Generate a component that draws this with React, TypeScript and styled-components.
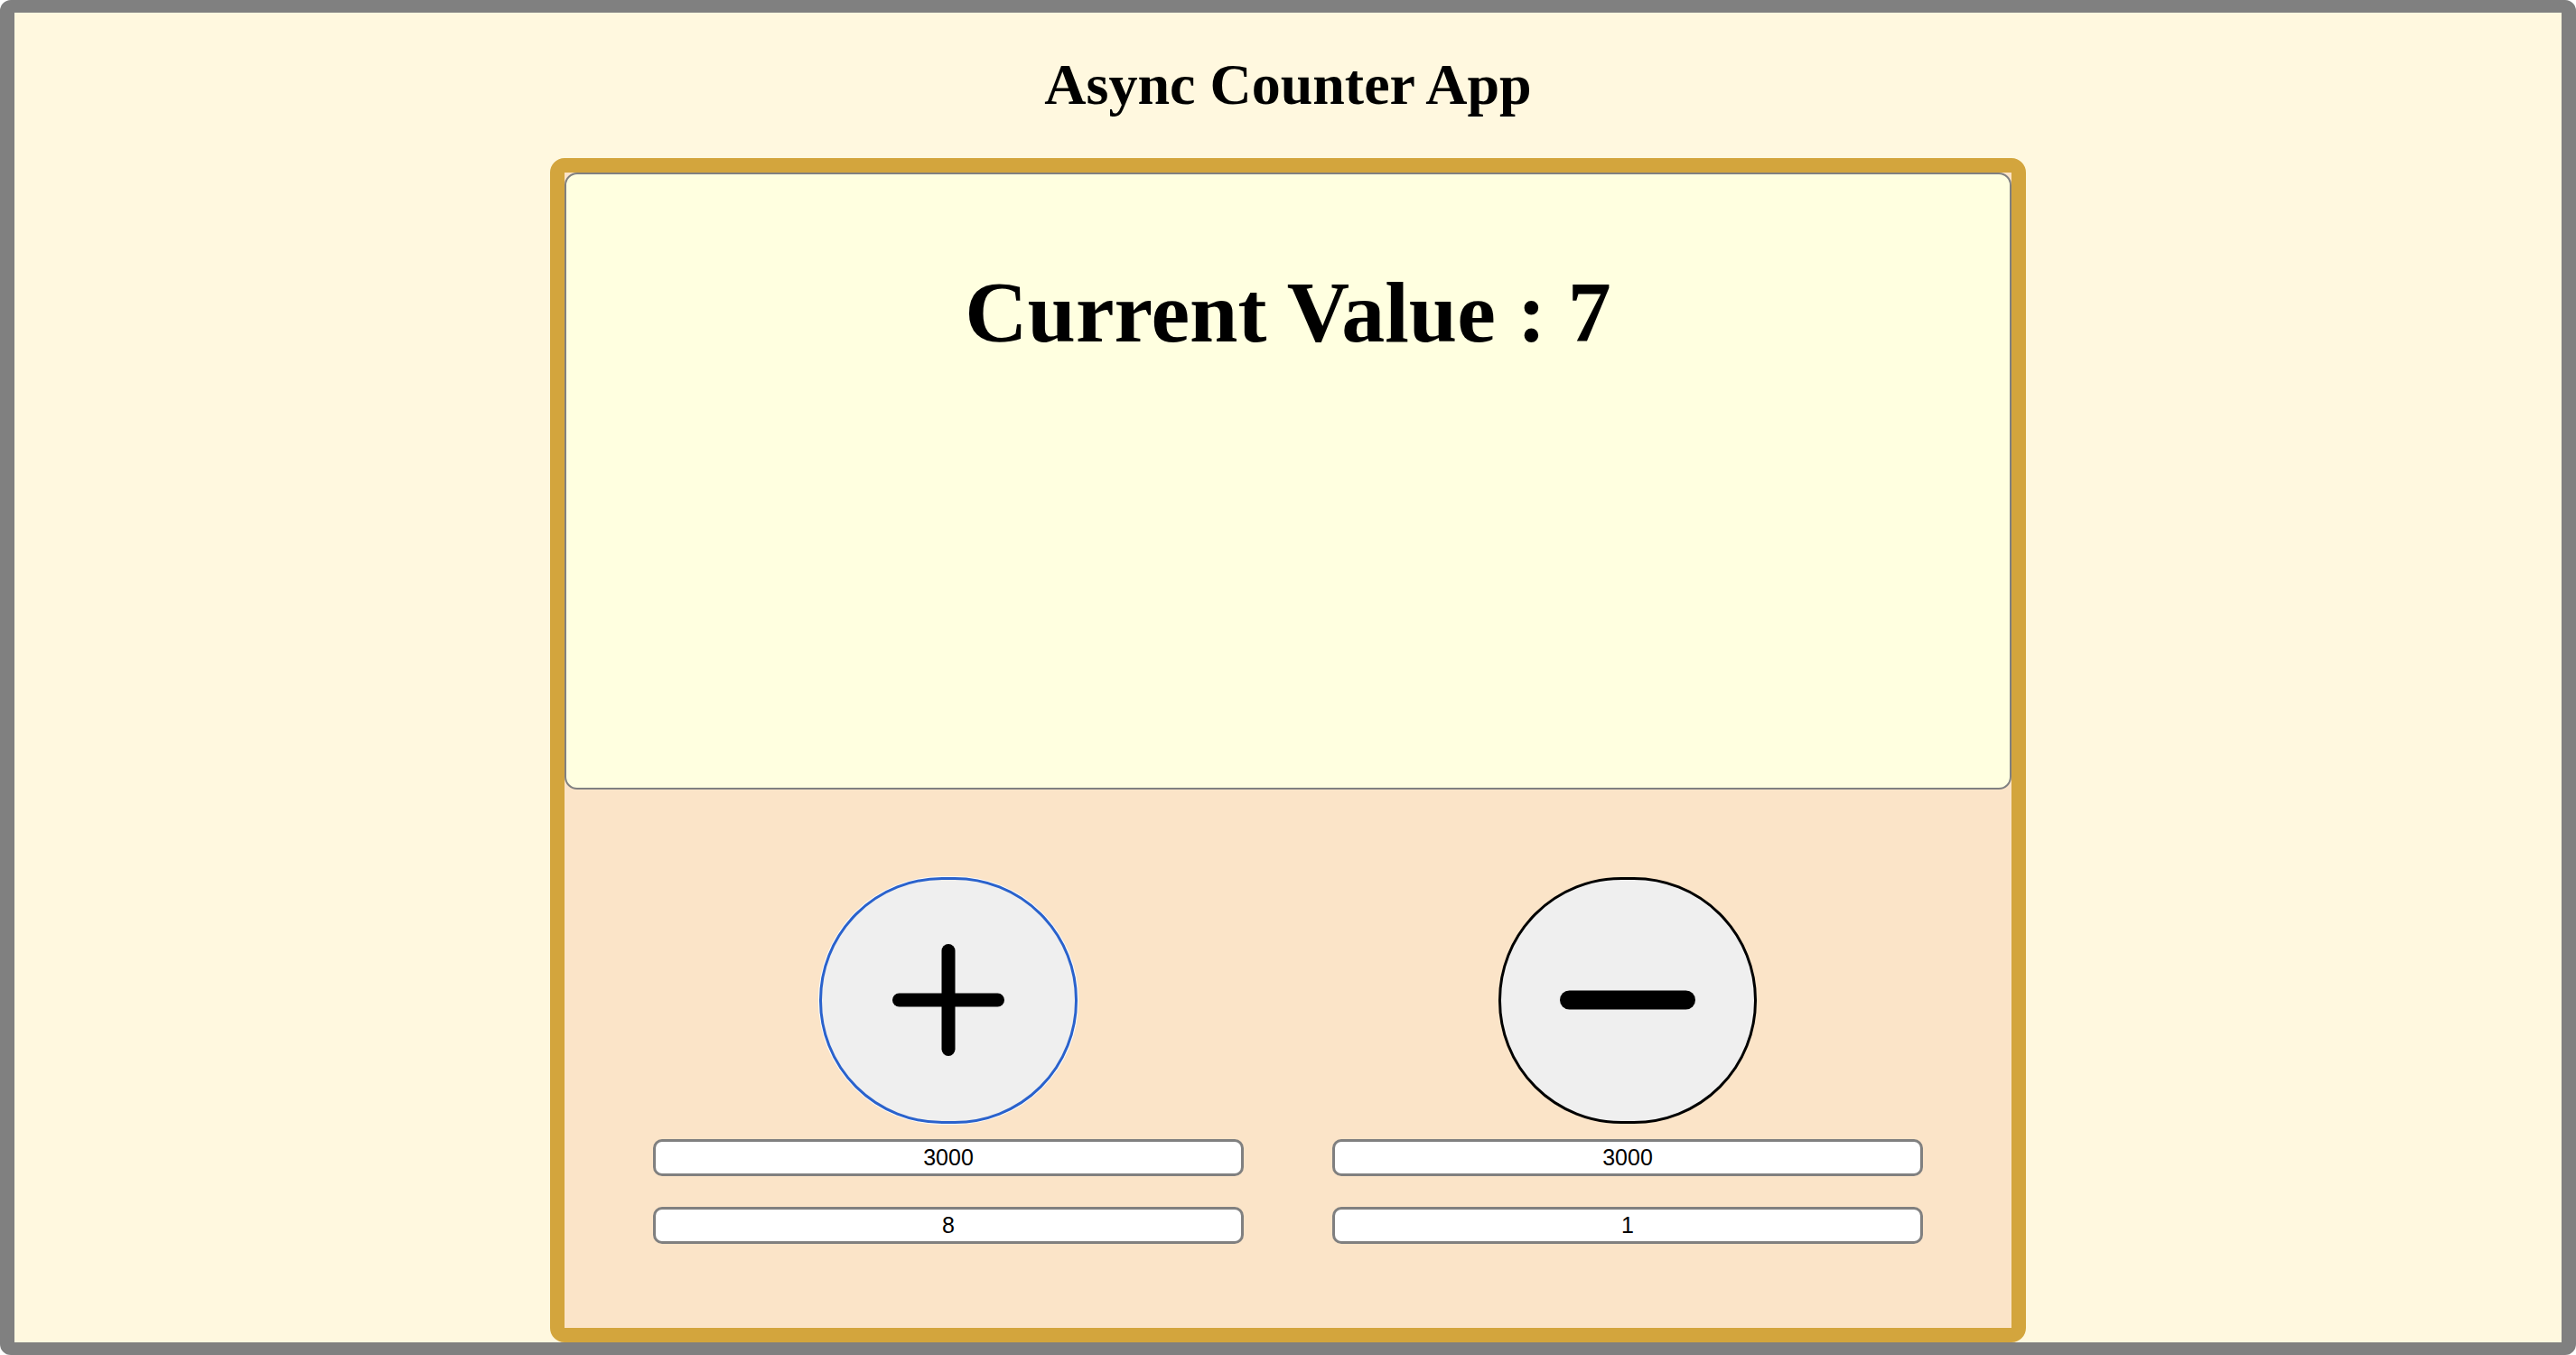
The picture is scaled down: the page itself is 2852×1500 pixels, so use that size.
import React, { useState } from "react";
import styled, { createGlobalStyle } from "styled-components";

const GlobalStyle = createGlobalStyle`
  html, body {
    margin: 0;
    padding: 0;
  }
  body {
    font-family: "Liberation Serif", "Times New Roman", serif;
  }
  * { box-sizing: border-box; }
`;

const Page = styled.div`
  height: 100vh;
  border-style: solid;
  border-color: #808080;
  border-width: 14px 16px;
  border-radius: 12px;
  background: #fff8df;
  display: flex;
  flex-direction: column;
  align-items: center;
`;

const Title = styled.h1`
  margin: 43px 0 44px;
  font-family: "Liberation Serif", "Times New Roman", serif;
  font-weight: 700;
  font-size: 64px;
  line-height: 1.15;
  color: #000;
`;

const Card = styled.div`
  flex: 1;
  width: 1634px;
  border: 16px solid #d3a53d;
  border-radius: 16px;
  background: #fbe4c8;
  display: flex;
  flex-direction: column;
`;

const Display = styled.div`
  height: 683px;
  border: 2px solid #808080;
  border-radius: 14px;
  background: #ffffe0;
  display: flex;
  justify-content: center;
  align-items: flex-start;
`;

const ValueText = styled.h2`
  margin: 98px 0 0;
  font-family: "Liberation Serif", "Times New Roman", serif;
  font-weight: 700;
  font-size: 96px;
  line-height: 1.15;
  color: #000;
`;

const Controls = styled.div`
  flex: 1;
  display: flex;
  justify-content: space-evenly;
  align-items: flex-start;
  padding-top: 97px;
`;

const Column = styled.div`
  width: 654px;
  display: flex;
  flex-direction: column;
  align-items: center;
`;

const RoundButton = styled.button<{ $focused?: boolean }>`
  width: 286px;
  height: 273px;
  border-radius: 136px;
  background: #efefef;
  padding: 0;
  cursor: pointer;
  display: flex;
  align-items: center;
  justify-content: center;
  border: ${(p) => (p.$focused ? "3px solid #2a62cc" : "3px solid #000")};
  box-shadow: ${(p) => (p.$focused ? "0 0 0 1px #ffffff" : "none")};
  outline: none;
`;

const Field = styled.input<{ $gap: number }>`
  width: 654px;
  height: 41px;
  margin-top: ${(p) => p.$gap}px;
  border: 3px solid #808080;
  border-radius: 10px;
  background: #fff;
  font-family: "Liberation Sans", Arial, sans-serif;
  font-size: 25px;
  color: #000;
  text-align: center;
  padding: 0;
  outline: none;
`;

const PlusIcon = () => (
  <svg width="124" height="124" viewBox="0 0 124 124" aria-hidden="true">
    <line x1="62" y1="7.5" x2="62" y2="116.5" stroke="#000" strokeWidth="15" strokeLinecap="round" />
    <line x1="7.5" y1="62" x2="116.5" y2="62" stroke="#000" strokeWidth="15" strokeLinecap="round" />
  </svg>
);

const MinusIcon = () => (
  <svg width="150" height="22" viewBox="0 0 150 22" aria-hidden="true">
    <line x1="10.5" y1="11" x2="139.5" y2="11" stroke="#000" strokeWidth="21" strokeLinecap="round" />
  </svg>
);

export default function App() {
  const [value, setValue] = useState(7);
  const [incDelay, setIncDelay] = useState("3000");
  const [incStep, setIncStep] = useState("8");
  const [decDelay, setDecDelay] = useState("3000");
  const [decStep, setDecStep] = useState("1");

  const change = (delay: string, step: string, sign: number) => {
    const d = Number(delay) || 0;
    const s = Number(step) || 0;
    setTimeout(() => setValue((v) => v + sign * s), d);
  };

  return (
    <>
      <GlobalStyle />
      <Page>
        <Title>Async Counter App</Title>
        <Card>
          <Display>
            <ValueText>Current Value : {value}</ValueText>
          </Display>
          <Controls>
            <Column>
              <RoundButton $focused onClick={() => change(incDelay, incStep, 1)} aria-label="Increment">
                <PlusIcon />
              </RoundButton>
              <Field $gap={17} value={incDelay} onChange={(e) => setIncDelay(e.target.value)} />
              <Field $gap={34} value={incStep} onChange={(e) => setIncStep(e.target.value)} />
            </Column>
            <Column>
              <RoundButton onClick={() => change(decDelay, decStep, -1)} aria-label="Decrement">
                <MinusIcon />
              </RoundButton>
              <Field $gap={17} value={decDelay} onChange={(e) => setDecDelay(e.target.value)} />
              <Field $gap={34} value={decStep} onChange={(e) => setDecStep(e.target.value)} />
            </Column>
          </Controls>
        </Card>
      </Page>
    </>
  );
}
